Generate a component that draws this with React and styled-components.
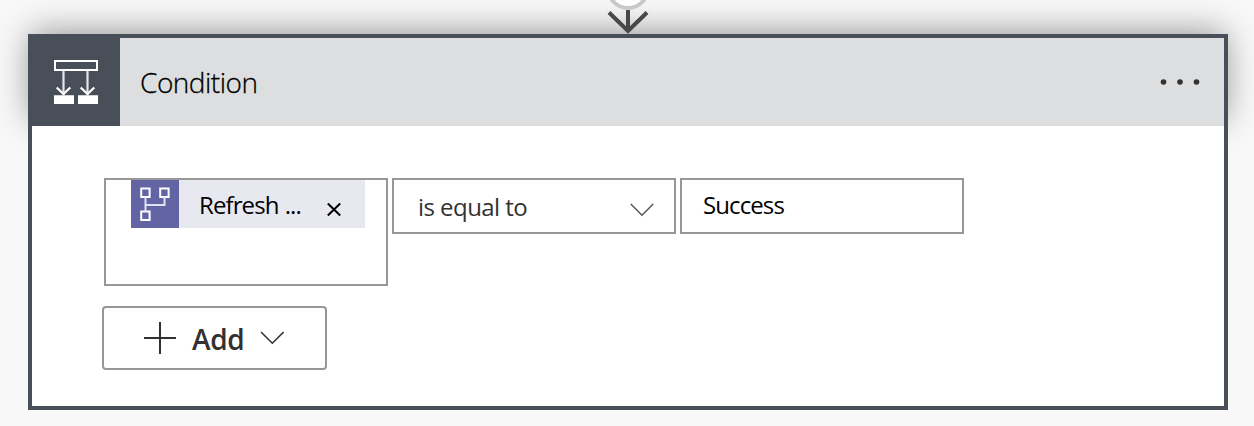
import React from "react";
import styled, { createGlobalStyle } from "styled-components";

const GlobalStyle = createGlobalStyle`
  * { box-sizing: border-box; }
  body {
    margin: 0;
    background: #f8f8f8;
    font-family: "Open Sans", "Noto Sans", sans-serif;
    overflow: hidden;
  }
  button { font-family: inherit; }
`;

const Page = styled.main`
  height: 426px;
  padding: 0 26px 0 28px;
  display: flex;
  flex-direction: column;
`;

const Connector = styled.div`
  position: relative;
  z-index: 2;
  height: 34px;
  display: flex;
  justify-content: center;
  svg { display: block; }
`;

const Header = styled.header`
  height: 92px;
  display: flex;
  align-items: stretch;
  background: #dddee0;
  border: solid #484f58;
  border-width: 4px 4px 0;
  box-shadow: 0 -4px 34px -3px rgba(0, 0, 0, 0.43);
`;

const IconTile = styled.div`
  width: 88px;
  background: #484f58;
  svg { display: block; }
`;

const Title = styled.h1`
  flex: 1;
  margin: 0;
  padding-left: 20px;
  font-size: 28px;
  font-weight: 300;
  line-height: 89px;
  letter-spacing: ${(p) => p.$spacing}px;
  color: #000;
  -webkit-text-stroke: 0.3px #000;
`;

const MenuButton = styled.button`
  width: 64px;
  padding: 0;
  border: 0;
  background: none;
  margin-right: 12px;
  svg { display: block; }
`;

const Body = styled.section`
  position: relative;
  height: 284px;
  padding: 52px 70px 0;
  background: #fff;
  border: solid #484f58;
  border-width: 0 4px 4px;
`;

const Row = styled.div`
  display: flex;
  align-items: flex-start;
  gap: 4px;
  padding-left: 2px;
`;

const Field = styled.div`
  width: 284px;
  height: ${(p) => p.$height || 56}px;
  padding: 0 ${(p) => p.$right || 20}px 0 ${(p) => p.$left}px;
  display: flex;
  align-items: flex-start;
  justify-content: space-between;
  border: 2px solid #979797;
  background: #fff;
`;

const Token = styled.div`
  display: flex;
  width: 234px;
  height: 48px;
  background: #e8e8f0;
  svg { display: block; flex: none; }
`;

const Text = styled.span`
  font-size: 24px;
  line-height: ${(p) => p.$line}px;
  letter-spacing: ${(p) => p.$spacing}px;
  word-spacing: ${(p) => p.$words || 0}px;
  color: ${(p) => p.$color || "#000"};
  white-space: pre;
`;

const TokenLabel = styled(Text)`
  width: 135px;
  padding-left: 20px;
`;

const AddButton = styled.button`
  display: flex;
  width: 225px;
  height: 64px;
  margin-top: 20px;
  padding: 0 0 0 40px;
  border: 2px solid #979797;
  border-radius: 4px;
  background: #fff;
  svg { display: block; flex: none; }
`;

const AddLabel = styled.span`
  width: 68px;
  padding-left: 16px;
  font-size: 28px;
  font-weight: 600;
  line-height: 63px;
  letter-spacing: ${(p) => p.$spacing}px;
  color: #323130;
  text-align: left;
  white-space: nowrap;
`;

const ConditionIcon = () => (
  <svg width="88" height="88" viewBox="0 0 88 88" fill="none" stroke="#fff">
    <path d="M23 23H65V32H23Z" strokeWidth="2" />
    <path d="M31.5 33V57M55.5 33V57" strokeWidth="2.2" stroke="#e6e7e9" />
    <path d="M24.7 49.5L31.5 56L38.3 49.5M48.7 49.5L55.5 56L62.3 49.5" strokeWidth="2.3" />
    <path d="M22 57.3H42V66H22ZM46 57.3H66V66H46Z" fill="#fff" stroke="none" />
  </svg>
);

const FlowIcon = () => (
  <svg width="48" height="48" viewBox="0 0 48 48" fill="none" stroke="#fff" strokeWidth="2">
    <path d="M10.2 8.5H18.6V16.9H10.2ZM29.2 8.5H37.6V16.9H29.2ZM10.2 31.5H18.6V39.9H10.2Z" />
    <path d="M14.5 17V31.5M14.5 25H33.5V17" stroke="#e3e2f0" />
  </svg>
);

export default function App() {
  return (
    <Page>
      <GlobalStyle />
      <Connector>
        <svg width="60" height="34" viewBox="0 0 60 34" fill="none">
          <circle cx="30" cy="-12" r="20" fill="#fff" stroke="#c8c8c8" strokeWidth="4" />
          <path d="M30 10V31M11 12.5L30 31L49 12.5" stroke="#484848" strokeWidth="4" />
        </svg>
      </Connector>
      <Header>
        <IconTile>
          <ConditionIcon />
        </IconTile>
        <Title $spacing={-0.5}>Condition</Title>
        <MenuButton aria-label="More options">
          <svg width="64" height="88" viewBox="0 0 64 88" fill="#323130">
            <circle cx="15.5" cy="44" r="2.8" />
            <circle cx="32" cy="44" r="2.8" />
            <circle cx="48.5" cy="44" r="2.8" />
          </svg>
        </MenuButton>
      </Header>
      <Body>
        <Row>
          <Field $left={25} $height={108}>
            <Token>
              <svg width="48" height="48" viewBox="0 0 48 48">
                <rect width="48" height="48" fill="#6264a3" />
                <FlowIcon />
              </svg>
              <TokenLabel $line={50} $spacing={-0.9} $words={0.8}>Refresh ...</TokenLabel>
              <svg width="40" height="48" viewBox="0 0 40 48" fill="none" stroke="#000" strokeWidth="2">
                <path d="M13.8 23.5L26.2 35.5M26.2 23.5L13.8 35.5" />
              </svg>
            </Token>
          </Field>
          <Field $left={24} $right={20}>
            <Text $line={54} $spacing={-0.55} $color="#323130">is equal to</Text>
            <svg width="24" height="52" viewBox="0 0 24 52" fill="none" stroke="#555" strokeWidth="1.5">
              <path d="M.8 24L12 35.2L23.2 24" />
            </svg>
          </Field>
          <Field $left={21}>
            <Text $line={50} $spacing={-0.9}>Success</Text>
          </Field>
        </Row>
        <AddButton>
          <svg width="32" height="60" viewBox="0 0 32 60" fill="none" stroke="#323130" strokeWidth="2">
            <path d="M0 30H32M16 14V46" />
          </svg>
          <AddLabel $spacing={-0.3}>Add</AddLabel>
          <svg width="40" height="60" viewBox="0 0 40 60" fill="none" stroke="#323130" strokeWidth="1.5">
            <path d="M17 24L28.3 35.2L39.6 24" />
          </svg>
        </AddButton>
      </Body>
    </Page>
  );
}
